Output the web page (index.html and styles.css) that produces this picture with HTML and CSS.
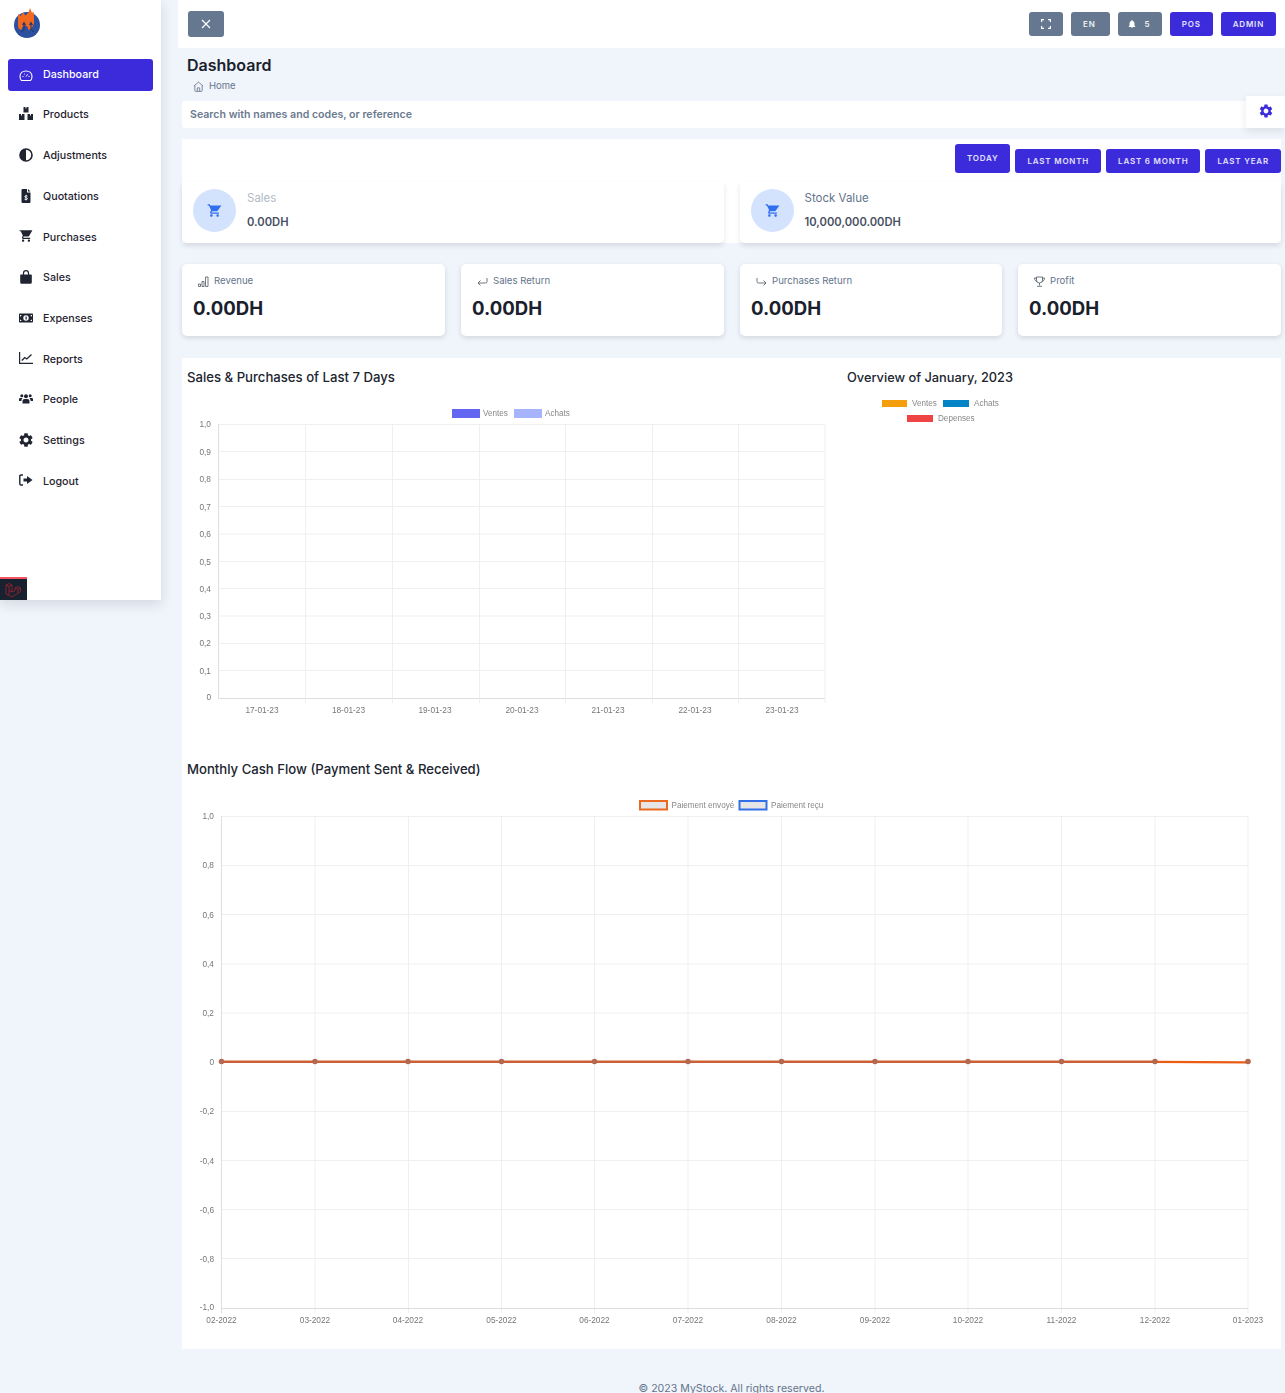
FILE: index.html
```html
<!DOCTYPE html>
<html lang="en">
<head>
<meta charset="utf-8">
<title>Dashboard</title>
<link rel="stylesheet" href="styles.css">
</head>
<body>
<div class="app">
  <aside class="sidebar">
    <div class="logo">
      <svg width="32" height="32" viewBox="0 0 32 32">
        <circle cx="14" cy="17" r="13" fill="#2c4f9e"/>
        <path d="M5 6l2.500 2 2.500-3.500 2.500 3 3-3 1.500-4.500 2 5 1.500-1.500.5 4v8l-2.500 5-3 1.500-1-3-1.500-1.500h-2l-1.500 1.500-1 3-3-1.500L5 17z" fill="#f0691f"/>
        <path d="M11 15v6l-2.500 3M18 15v6l2.500 3M9.500 17l1.500-2.500 1.500 2.500M16.500 17l1.500-2.500 1.500 2.500" fill="none" stroke="#21376f" stroke-width="1.100"/>
      </svg>
    </div>
    <nav class="nav">
      <a class="nav-item active"><svg class="nav-icon" viewBox="0 0 14 14"><path d="M2.500 11.500h9c1-.8 1.500-2.300 1.500-4.200C13 4.300 10.500 2 7 2S1 4.300 1 7.300c0 1.900.5 3.400 1.500 4.200z" fill="none" stroke="currentColor" stroke-width="1.100"/><path d="M7 7.500l1.800-2.200" stroke="currentColor" stroke-width="1"/><path d="M3.500 7.500h1M9.500 7.500h1M5 5h.8" stroke="currentColor" stroke-width="1"/></svg><span>Dashboard</span></a>
      <a class="nav-item"><svg class="nav-icon" viewBox="0 0 14 14"><path d="M4.500 0h2v1.500h1V0h2v5.500h-5zM0 7h2v1.500h1V7h2.500v6H0zM8.500 7H11v1.500h1V7h2v6H8.500z" fill="currentColor"/></svg><span>Products</span></a>
      <a class="nav-item"><svg class="nav-icon" viewBox="0 0 14 14"><circle cx="7" cy="7" r="6" fill="none" stroke="currentColor" stroke-width="1.600"/><path d="M7 1a6 6 0 0 0 0 12z" fill="currentColor"/></svg><span>Adjustments</span></a>
      <a class="nav-item"><svg class="nav-icon" viewBox="0 0 14 14"><path d="M2.500 0H8v3.500h3.500V13a1 1 0 0 1-1 1h-7a1 1 0 0 1-1-1V1a1 1 0 0 1 1-1zM9 0l2.500 2.500H9z" fill="currentColor"/><path d="M8.500 7.200c-.4-.5-2.600-.7-2.700.5-.1 1.300 2.800.7 2.700 2-.1 1.200-2.500 1-3 .4M7 5.800v5.600" fill="none" stroke="#fff" stroke-width=".9"/></svg><span>Quotations</span></a>
      <a class="nav-item"><svg class="nav-icon" viewBox="0 0 24 24"><path d="M7 18c-1.100 0-1.990.9-1.990 2S5.900 22 7 22s2-.9 2-2-.9-2-2-2zM1 2v2h2l3.600 7.590-1.350 2.450c-.16.28-.25.61-.25.96 0 1.100.9 2 2 2h12v-2H7.420c-.14 0-.25-.11-.25-.25l.03-.12.9-1.630h7.450c.75 0 1.410-.41 1.750-1.030L23 2H5.210l-.94 0H1zm16 16c-1.100 0-1.990.9-1.990 2s.89 2 1.990 2 2-.9 2-2-.9-2-2-2z" fill="currentColor"/></svg><span>Purchases</span></a>
      <a class="nav-item"><svg class="nav-icon" viewBox="0 0 14 14"><path d="M2 4.500h10a.8.8 0 0 1 .8.8v7a1.500 1.500 0 0 1-1.500 1.500H2.700a1.500 1.500 0 0 1-1.500-1.500v-7a.8.8 0 0 1 .8-.8z" fill="currentColor"/><path d="M4.500 6V3.200a2.500 2.500 0 0 1 5 0V6" fill="none" stroke="currentColor" stroke-width="1.200"/></svg><span>Sales</span></a>
      <a class="nav-item"><svg class="nav-icon" viewBox="0 0 14 14"><path fill-rule="evenodd" d="M.8 2.500h12.400a.8.8 0 0 1 .8.800v7.400a.8.8 0 0 1-.8.800H.8a.8.8 0 0 1-.8-.8V3.300a.8.8 0 0 1 .8-.8zM7 4.300a2.700 2.700 0 1 0 0 5.400 2.700 2.700 0 0 0 0-5.400zM1 4v1.500A1.500 1.500 0 0 0 2.500 4zM1 10h1.500A1.500 1.500 0 0 0 1 8.500zM13 4h-1.500A1.500 1.500 0 0 0 13 5.500zM13 10V8.500A1.500 1.500 0 0 0 11.500 10z" fill="currentColor"/><rect x="6.500" y="5.500" width="1.200" height="3" fill="currentColor"/></svg><span>Expenses</span></a>
      <a class="nav-item"><svg class="nav-icon" viewBox="0 0 14 14"><path d="M.6 1v11.400H14" fill="none" stroke="currentColor" stroke-width="1.200"/><path d="M2.800 9.500l3-3 2 1.500L12.500 3.500" fill="none" stroke="currentColor" stroke-width="1.300"/></svg><span>Reports</span></a>
      <a class="nav-item"><svg class="nav-icon" viewBox="0 0 14 14"><circle cx="2.800" cy="3.800" r="1.500" fill="currentColor"/><circle cx="11.200" cy="3.800" r="1.500" fill="currentColor"/><circle cx="7" cy="4.200" r="2" fill="currentColor"/><path d="M0 9V7.300c0-.8.6-1.300 1.300-1.300h2.400c-.8.800-1.300 1.700-1.300 3zM14 9V7.300c0-.8-.6-1.300-1.300-1.300h-2.400c.8.800 1.300 1.700 1.300 3zM3.500 11.500V9.200c0-1.300 1-2.200 2.200-2.200h2.600c1.200 0 2.200.9 2.200 2.200v2.300z" fill="currentColor"/></svg><span>People</span></a>
      <a class="nav-item"><svg class="nav-icon" viewBox="2 2 20 20"><path d="M19.140 12.940c.04-.3.06-.61.06-.94 0-.32-.02-.64-.07-.94l2.030-1.580c.18-.14.23-.41.12-.61l-1.920-3.320c-.12-.22-.37-.29-.59-.22l-2.390.96c-.5-.38-1.030-.7-1.620-.94l-.36-2.540c-.04-.24-.24-.41-.48-.41h-3.840c-.24 0-.43.17-.47.41l-.36 2.540c-.59.24-1.130.57-1.620.94l-2.390-.96c-.22-.08-.47 0-.59.22L2.740 8.870c-.12.21-.08.47.12.61l2.030 1.580c-.05.3-.09.63-.09.94s.02.64.07.94l-2.030 1.580c-.18.14-.23.41-.12.61l1.920 3.320c.12.22.37.29.59.22l2.390-.96c.5.38 1.030.7 1.620.94l.36 2.540c.05.24.24.41.48.41h3.840c.24 0 .44-.17.47-.41l.36-2.540c.59-.24 1.130-.56 1.620-.94l2.390.96c.22.08.47 0 .59-.22l1.920-3.320c.12-.22.07-.47-.12-.61l-2.010-1.580zM12 15.600c-1.980 0-3.600-1.620-3.600-3.600s1.620-3.600 3.600-3.600 3.600 1.620 3.600 3.600-1.620 3.600-3.600 3.600z" fill="currentColor"/></svg><span>Settings</span></a>
      <a class="nav-item"><svg class="nav-icon" viewBox="0 0 14 14"><path d="M4 2H2a1.200 1.200 0 0 0-1.200 1.200v7.600A1.200 1.200 0 0 0 2 12h2" fill="none" stroke="currentColor" stroke-width="1.400"/><path d="M4.500 5.500H8V3l5.500 4L8 11V8.500H4.500z" fill="currentColor"/></svg><span>Logout</span></a>
    </nav>
    <div class="debugbar">
      <svg width="16" height="15" viewBox="0 0 16 15"><path d="M1 2l3-1.500L7 2v7l3-1.500V5l3-1.500L15.500 5v3.500L7 14 1 11zM1 2l3 1.500L7 2M4 3.500v8.500M7 9L4 7.500M10 5l3 1.500 2.500-1.500M13 6.500V10" fill="none" stroke="#b3242d" stroke-width=".7"/></svg>
    </div>
  </aside>

  <main class="main">
    <header class="topbar">
      <button class="btn btn-close"><svg width="10" height="10" viewBox="0 0 10 10"><path d="M1 1l8 8M9 1l-8 8" stroke="#fff" stroke-width="1.200"/></svg></button>
      <div class="top-actions">
        <button class="btn btn-slate btn-expand"><svg width="10" height="10" viewBox="0 0 10 10"><path d="M.6 3V.6H3M7 .6h2.400V3M.6 7v2.400H3M7 9.400h2.400V7" fill="none" stroke="#fff" stroke-width="1.200"/></svg></button>
        <button class="btn btn-slate btn-lang">EN</button>
        <button class="btn btn-slate btn-bell"><svg width="10" height="10" viewBox="0 0 24 24"><path d="M12 22c1.100 0 2-.9 2-2h-4c0 1.100.89 2 2 2zm6-6v-5c0-3.070-1.640-5.640-4.500-6.320V4c0-.83-.67-1.500-1.500-1.500s-1.500.67-1.500 1.500v.68C7.630 5.360 6 7.920 6 11v5l-2 2v1h16v-1l-2-2z" fill="#fff"/></svg><span>5</span></button>
        <button class="btn btn-primary">POS</button>
        <button class="btn btn-primary">ADMIN</button>
      </div>
    </header>

    <div class="page-head">
      <h1 class="page-title">Dashboard</h1>
      <div class="crumb"><svg width="11" height="11" viewBox="0 0 12 12"><path d="M1 5.500L6 1.200l5 4.300M2 4.800v5.700a.8.8 0 0 0 .8.8h6.400a.8.8 0 0 0 .8-.8V4.800M4.700 11.300V7.500h2.600v3.800" fill="none" stroke="#64748b" stroke-width=".9"/></svg><span>Home</span></div>
    </div>

    <div class="search">
      <span>Search with names and codes, or reference</span>
      <div class="gear-box"><svg width="16" height="16" viewBox="0 0 24 24"><path d="M19.140 12.940c.04-.3.06-.61.06-.94 0-.32-.02-.64-.07-.94l2.030-1.580c.18-.14.23-.41.12-.61l-1.920-3.320c-.12-.22-.37-.29-.59-.22l-2.390.96c-.5-.38-1.030-.7-1.620-.94l-.36-2.540c-.04-.24-.24-.41-.48-.41h-3.840c-.24 0-.43.17-.47.41l-.36 2.540c-.59.24-1.130.57-1.620.94l-2.390-.96c-.22-.08-.47 0-.59.22L2.740 8.870c-.12.21-.08.47.12.61l2.030 1.580c-.05.3-.09.63-.09.94s.02.64.07.94l-2.030 1.580c-.18.14-.23.41-.12.61l1.920 3.320c.12.22.37.29.59.22l2.390-.96c.5.38 1.030.7 1.620.94l.36 2.540c.05.24.24.41.48.41h3.840c.24 0 .44-.17.47-.41l.36-2.540c.59-.24 1.130-.56 1.620-.94l2.390.96c.22.08.47 0 .59-.22l1.920-3.320c.12-.22.07-.47-.12-.61l-2.010-1.580zM12 15.600c-1.980 0-3.600-1.620-3.600-3.600s1.620-3.600 3.600-3.600 3.600 1.620 3.600 3.600-1.620 3.600-3.600 3.600z" fill="#3b2bdb"/></svg></div>
    </div>

    <section class="summary">
      <div class="ranges">
        <button class="btn btn-primary btn-today">TODAY</button>
        <button class="btn btn-primary">LAST MONTH</button>
        <button class="btn btn-primary">LAST 6 MONTH</button>
        <button class="btn btn-primary">LAST YEAR</button>
      </div>
      <div class="stat-row">
        <div class="stat">
          <div class="stat-icon"><svg width="15" height="15" viewBox="0 0 24 24"><path d="M7 18c-1.100 0-1.990.9-1.990 2S5.900 22 7 22s2-.9 2-2-.9-2-2-2zM1 2v2h2l3.600 7.590-1.350 2.450c-.16.28-.25.61-.25.96 0 1.100.9 2 2 2h12v-2H7.420c-.14 0-.25-.11-.25-.25l.03-.12.9-1.630h7.450c.75 0 1.410-.41 1.750-1.030L23 4H5.210l-.94-2H1zm16 16c-1.100 0-1.990.9-1.990 2s.89 2 1.990 2 2-.9 2-2-.9-2-2-2z" fill="#2f6ff0"/></svg></div>
          <div><div class="stat-label stat-label-light">Sales</div><div class="stat-value">0.00DH</div></div>
        </div>
        <div class="stat">
          <div class="stat-icon"><svg width="15" height="15" viewBox="0 0 24 24"><path d="M7 18c-1.100 0-1.990.9-1.990 2S5.900 22 7 22s2-.9 2-2-.9-2-2-2zM1 2v2h2l3.600 7.590-1.350 2.450c-.16.28-.25.61-.25.96 0 1.100.9 2 2 2h12v-2H7.420c-.14 0-.25-.11-.25-.25l.03-.12.9-1.630h7.450c.75 0 1.410-.41 1.750-1.030L23 4H5.210l-.94-2H1zm16 16c-1.100 0-1.990.9-1.990 2s.89 2 1.990 2 2-.9 2-2-.9-2-2-2z" fill="#2f6ff0"/></svg></div>
          <div><div class="stat-label">Stock Value</div><div class="stat-value">10,000,000.00DH</div></div>
        </div>
      </div>
    </section>

    <section class="kpis">
      <div class="kpi">
        <div class="kpi-label"><svg width="11" height="11" viewBox="0 0 11 11"><path d="M.5 8h2v2.500h-2zM4 5.500h2v5H4zM7.500 1h2.500v9.500H7.500z" fill="none" stroke="#4b5563" stroke-width=".8"/></svg><span>Revenue</span></div>
        <div class="kpi-value">0.00DH</div>
      </div>
      <div class="kpi">
        <div class="kpi-label"><svg width="11" height="11" viewBox="0 0 11 11"><path d="M10 2v3.500a1.500 1.500 0 0 1-1.500 1.500H1M3.500 4.500L1 7l2.500 2.500" fill="none" stroke="#4b5563" stroke-width=".8"/></svg><span>Sales Return</span></div>
        <div class="kpi-value">0.00DH</div>
      </div>
      <div class="kpi">
        <div class="kpi-label"><svg width="11" height="11" viewBox="0 0 11 11"><path d="M1 2v3.500A1.500 1.500 0 0 0 2.500 7H10M7.500 4.500L10 7 7.500 9.500" fill="none" stroke="#4b5563" stroke-width=".8"/></svg><span>Purchases Return</span></div>
        <div class="kpi-value">0.00DH</div>
      </div>
      <div class="kpi">
        <div class="kpi-label"><svg width="11" height="11" viewBox="0 0 11 11"><path d="M2.500 1h6v3a3 3 0 0 1-6 0zM2.500 2H.5c0 2 .8 3 2.500 3.500M8.500 2h2c0 2-.8 3-2.500 3.500M5.500 7v2.500M3 10.300h5" fill="none" stroke="#4b5563" stroke-width=".8"/></svg><span>Profit</span></div>
        <div class="kpi-value">0.00DH</div>
      </div>
    </section>

    <section class="charts">
      <div class="chart-top">
        <div class="chart-left">
          <h2 class="chart-title">Sales &amp; Purchases of Last 7 Days</h2>
          <svg class="chart chart-bars" viewBox="182 395 660 335">
            <path class="grid" d="M305.500 424V703M392.500 424V703M479.500 424V703M565.500 424V703M652.500 424V703M738.500 424V703M825 424V703M218 424.500H825M218 451.500H825M218 479.500H825M218 506.500H825M218 534H825M218 561.500H825M218 588.500H825M218 616H825M218 643.500H825M218 670.500H825"/>
            <path class="axis" d="M218.500 424V698M218 698.500H825"/>
            <g class="tick tick-end">
              <text x="211" y="427">1,0</text><text x="211" y="454.500">0,9</text><text x="211" y="482">0,8</text><text x="211" y="509.500">0,7</text><text x="211" y="537">0,6</text><text x="211" y="564.500">0,5</text><text x="211" y="591.500">0,4</text><text x="211" y="619">0,3</text><text x="211" y="646">0,2</text><text x="211" y="673.500">0,1</text><text x="211" y="700">0</text>
            </g>
            <g class="tick tick-mid">
              <text x="262" y="713">17-01-23</text><text x="348.500" y="713">18-01-23</text><text x="435" y="713">19-01-23</text><text x="522" y="713">20-01-23</text><text x="608" y="713">21-01-23</text><text x="695" y="713">22-01-23</text><text x="782" y="713">23-01-23</text>
            </g>
            <rect x="452" y="409" width="28" height="9" fill="#6366f1"/>
            <text class="legend" x="483" y="416">Ventes</text>
            <rect x="514" y="409" width="28" height="9" fill="#a5b4fc"/>
            <text class="legend" x="545" y="416">Achats</text>
          </svg>
        </div>
        <div class="chart-right">
          <h2 class="chart-title">Overview of January, 2023</h2>
          <svg class="chart chart-pie" viewBox="842 395 439 335">
            <rect x="882" y="400" width="25" height="7" fill="#f59e0b"/>
            <text class="legend" x="912" y="406">Ventes</text>
            <rect x="943" y="400" width="26" height="7" fill="#0284c7"/>
            <text class="legend" x="974" y="406">Achats</text>
            <rect x="907" y="415" width="26" height="7" fill="#ef4444"/>
            <text class="legend" x="938" y="421">Depenses</text>
          </svg>
        </div>
      </div>
      <h2 class="chart-title chart-title-flow">Monthly Cash Flow (Payment Sent &amp; Received)</h2>
      <svg class="chart chart-line" viewBox="182 790 1099 550">
        <path class="grid" d="M315 816V1313M408.500 816V1313M501.500 816V1313M594.500 816V1313M688 816V1313M781.500 816V1313M875 816V1313M968 816V1313M1061.500 816V1313M1155 816V1313M1248 816V1313M221 816.500H1248M221 865.500H1248M221 914.500H1248M221 964H1248M221 1013H1248M221 1111.500H1248M221 1160.500H1248M221 1209.500H1248M221 1258.500H1248"/>
        <path class="axis" d="M221.500 816V1313M221 1308.500H1248"/>
        <g class="tick tick-end">
          <text x="214" y="819">1,0</text><text x="214" y="868">0,8</text><text x="214" y="917.500">0,6</text><text x="214" y="967">0,4</text><text x="214" y="1016">0,2</text><text x="214" y="1065">0</text><text x="214" y="1114">-0,2</text><text x="214" y="1163.500">-0,4</text><text x="214" y="1212.500">-0,6</text><text x="214" y="1261.500">-0,8</text><text x="214" y="1310">-1,0</text>
        </g>
        <g class="tick tick-mid">
          <text x="221.500" y="1323">02-2022</text><text x="315" y="1323">03-2022</text><text x="408" y="1323">04-2022</text><text x="501.500" y="1323">05-2022</text><text x="594.500" y="1323">06-2022</text><text x="688" y="1323">07-2022</text><text x="781.500" y="1323">08-2022</text><text x="875" y="1323">09-2022</text><text x="968" y="1323">10-2022</text><text x="1061.500" y="1323">11-2022</text><text x="1155" y="1323">12-2022</text><text x="1248" y="1323">01-2023</text>
        </g>
        <rect class="key key-orange" x="640" y="801" width="27" height="8.500"/>
        <text class="legend" x="671.500" y="808">Paiement envoyé</text>
        <rect class="key key-blue" x="739.500" y="801" width="27" height="8.500"/>
        <text class="legend" x="771" y="808">Paiement reçu</text>
        <path class="line-mix" d="M221.500 1061.800H1155"/>
        <path class="line-end" d="M1155 1061.800L1248 1062.300"/>
        <g class="dots">
          <circle cx="221.500" cy="1061.500" r="2.800"/><circle cx="315" cy="1061.500" r="2.800"/><circle cx="408" cy="1061.500" r="2.800"/><circle cx="501.500" cy="1061.500" r="2.800"/><circle cx="594.500" cy="1061.500" r="2.800"/><circle cx="688" cy="1061.500" r="2.800"/><circle cx="781.500" cy="1061.500" r="2.800"/><circle cx="875" cy="1061.500" r="2.800"/><circle cx="968" cy="1061.500" r="2.800"/><circle cx="1061.500" cy="1061.500" r="2.800"/><circle cx="1155" cy="1061.500" r="2.800"/><circle cx="1248" cy="1061.500" r="2.800"/>
        </g>
      </svg>
    </section>

    <footer class="footer">© 2023 MyStock. All rights reserved.</footer>
  </main>
</div>
</body>
</html>
```

FILE: styles.css
```css
* { box-sizing: border-box; }
html, body { margin: 0; padding: 0; height: 1393px; overflow: hidden; }
body { font-family: Inter, "Liberation Sans", sans-serif; color: #1a202c; background: #f0f4fb; }
svg { display: block; flex: none; }
button { font-family: inherit; border: 0; cursor: pointer; }

.app { display: flex; height: 1393px; overflow: hidden; }

.sidebar { width: 161px; height: 600px; flex: none; display: flex; flex-direction: column; background: #fff; box-shadow: 0 4px 12px rgba(30, 41, 59, .14); }
.logo { height: 59px; padding: 8px 0 0 13px; }
.nav { display: flex; flex-direction: column; gap: 8.690px; padding: 0 8px; }
.nav-item { height: 32px; display: flex; align-items: center; gap: 10px; padding: 0 0 1.400px 11px; border-radius: 3px; font-size: 10.700px; font-weight: 500; color: #1f2430; }
.nav-item.active { background: #3b2bdb; color: #fff; }
.nav-icon { width: 14px; height: 14px; margin-top: -1.600px; }
.active .nav-icon { margin-top: 2.400px; }
.debugbar { margin-top: auto; width: 27px; height: 23px; padding: 4px 0 0 5px; background: #18212f; border-top: 2px solid #f4545f; }

.main { flex: 1; min-width: 0; margin-left: 17px; }
.topbar { height: 48px; display: flex; align-items: center; justify-content: space-between; padding: 0 9px 0 10px; background: #fff; }
.top-actions { display: flex; gap: 8px; }

.btn { height: 24px; display: flex; align-items: center; justify-content: center; padding: 0 12px; border-radius: 3px; font-size: 8px; font-weight: 600; letter-spacing: .8px; color: #fff; }
.btn-primary { background: #3b2bdb; color: #e3e1fb; }
.btn-slate { background: #66788f; color: #eef0f4; }
.btn-close { width: 36px; height: 26px; background: #66788f; }
.btn-expand { width: 34px; }
.btn-lang { width: 39px; padding: 0 14px 0 12px; }
.btn-bell { width: 44px; padding: 0 2px 0 0; gap: 7px; }
.btn-today { height: 29px; padding-bottom: 2px; }

.page-head { height: 53px; padding: 7px 0 0 9px; }
.page-title { margin: 0; font-size: 16px; line-height: 20px; font-weight: 600; color: #1a202c; }
.crumb { display: flex; align-items: center; gap: 5px; margin-top: 4px; padding-left: 6px; font-size: 9.500px; line-height: 14px; color: #64748b; }

.search { position: relative; height: 27px; margin-left: 4px; display: flex; align-items: center; padding-left: 8px; background: #fff; border-radius: 3px 0 0 3px; font-size: 10.600px; font-weight: 600; color: #6b7a90; }
.gear-box { position: absolute; right: 0; top: -5px; width: 39px; height: 32px; padding-bottom: 2px; display: flex; align-items: center; justify-content: center; background: #fff; box-shadow: 0 3px 8px rgba(30, 41, 59, .1); }

.summary { margin: 11px 4px 0; background: #fff; padding-top: 5px; }
.ranges { display: flex; justify-content: flex-end; align-items: flex-end; gap: 5px; }
.stat-row { display: grid; grid-template-columns: 541.500px 541.500px; gap: 16px; margin-top: 9px; }
.stat { height: 61px; display: flex; gap: 11px; padding: 7px 0 0 11px; background: #fff; border-radius: 0 0 5px 5px; box-shadow: 0 3px 5px rgba(30, 41, 59, .12); }
.stat-icon { width: 43px; height: 43px; flex: none; display: flex; align-items: center; justify-content: center; border-radius: 50%; background: #d3e2fd; }
.stat-label { font-size: 11.500px; line-height: 18px; color: #64748b; }
.stat-label-light { color: #b2bac6; }
.stat-value { margin-top: 7px; font-size: 11.200px; line-height: 16px; font-weight: 600; color: #46505f; }

.kpis { display: grid; grid-template-columns: 263px 263px 262px 263px; gap: 16px; margin: 21px 4px 0; }
.kpi { height: 72px; padding: 10px 12px 0 11px; background: #fff; border-radius: 5px; box-shadow: 0 2px 5px rgba(30, 41, 59, .14); }
.kpi-label { display: flex; align-items: center; gap: 5px; padding-left: 5px; font-size: 9.600px; line-height: 14px; color: #64748b; }
.kpi-value { margin-top: 7px; font-size: 18.600px; line-height: 26px; font-weight: 700; color: #1a202c; }

.charts { margin: 22px 4px 0; padding: 12px 0 9px; background: #fff; }
.chart-top { display: flex; }
.chart-left { width: 660px; flex: none; }
.chart-right { flex: 1; min-width: 0; }
.chart-title { margin: 0; padding: 0 0 2px 5px; font-size: 13.150px; line-height: 14px; font-weight: 500; color: #20252f; }
.chart-right .chart-title { padding-bottom: 0; font-size: 12.800px; line-height: 16px; }
.chart-title-flow { margin-top: 32px; }
.chart { margin-top: 9px; filter: blur(.4px); }
.chart-bars { width: 660px; height: 335px; }
.chart-pie { width: 439px; height: 335px; }
.chart-line { width: 1099px; height: 550px; margin-top: 12px; }

.grid { fill: none; stroke: #efefef; stroke-width: 1; }
.axis { fill: none; stroke: #dedede; stroke-width: 1; }
.tick text, .legend { font-family: "Liberation Sans", sans-serif; fill: #777; }
.tick text { font-size: 8.300px; }
.tick-end text { text-anchor: end; }
.tick-mid text { text-anchor: middle; }
.legend { font-size: 8.150px; fill: #888; }
.key { fill: #e6e6e6; stroke-width: 2; }
.key-orange { stroke: #ea6a22; }
.key-blue { stroke: #3370e8; }
.line-mix { fill: none; stroke: #cc6034; stroke-width: 2.400; }
.line-end { fill: none; stroke: #ea5c12; stroke-width: 2.200; }
.dots circle { fill: #b3684f; }

.footer { padding-top: 34px; text-align: center; font-size: 10.600px; line-height: 12px; color: #64748b; }
```
